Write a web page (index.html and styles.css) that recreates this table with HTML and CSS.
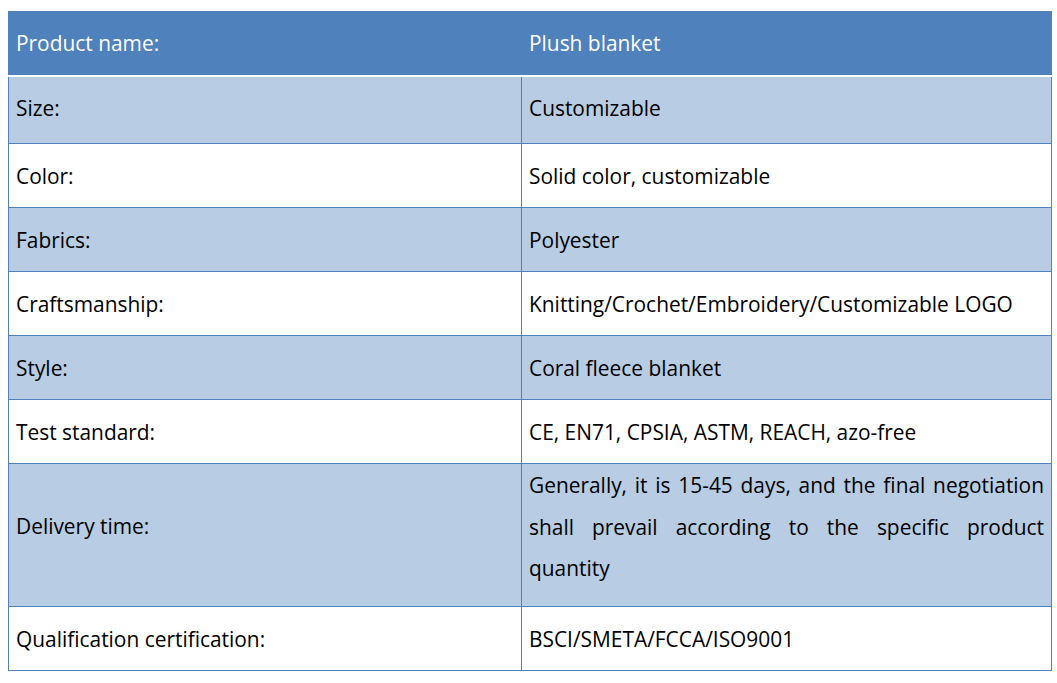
FILE: index.html
```html
<!DOCTYPE html>
<html>
<head>
<meta charset="utf-8">
<link rel="stylesheet" href="styles.css">
</head>
<body>
<table class="spec">
  <colgroup><col class="c1"><col class="c2"></colgroup>
  <thead>
    <tr class="head"><th>Product name:</th><th>Plush blanket</th></tr>
  </thead>
  <tbody>
    <tr class="alt first"><td>Size:</td><td>Customizable</td></tr>
    <tr><td>Color:</td><td>Solid color, customizable</td></tr>
    <tr class="alt"><td>Fabrics:</td><td>Polyester</td></tr>
    <tr><td>Craftsmanship:</td><td>Knitting/Crochet/Embroidery/Customizable LOGO</td></tr>
    <tr class="alt"><td>Style:</td><td>Coral fleece blanket</td></tr>
    <tr><td>Test standard:</td><td>CE, EN71, CPSIA, ASTM, REACH, azo-free</td></tr>
    <tr class="alt tall"><td class="label">Delivery time:</td><td class="just">Generally, it is 15-45 days, and the final negotiation shall prevail according to the specific product quantity</td></tr>
    <tr><td>Qualification certification:</td><td>BSCI/SMETA/FCCA/ISO9001</td></tr>
  </tbody>
</table>
</body>
</html>
```
FILE: styles.css
```css
html, body { margin: 0; padding: 0; background: #fff; }
body { padding: 11px 0 0 8px; font-family: "Open Sans", sans-serif; }
.spec {
  border-collapse: collapse;
  width: 1044px;
  table-layout: fixed;
  font-size: 20.9px;
  color: #000;
}
.c1 { width: 513px; }
.spec th, .spec td {
  border: 1px solid #4f81bd;
  padding: 0 7px;
  text-align: left;
  vertical-align: middle;
  font-weight: normal;
  height: 64px;
  box-sizing: border-box;
}
.head th {
  background: #4f81bd;
  color: #fff;
  height: 64px;
  border-bottom: 2px solid #fff;
}
.alt td { background: #b8cce4; }
.first td { height: 68px; padding-bottom: 4px; }
.tall td { height: 143px; }
.spec td.label { padding-bottom: 18px; }
.spec td.just {
  text-align: justify;
  line-height: 41.5px;
  vertical-align: top;
  padding-top: 1px;
}
```
